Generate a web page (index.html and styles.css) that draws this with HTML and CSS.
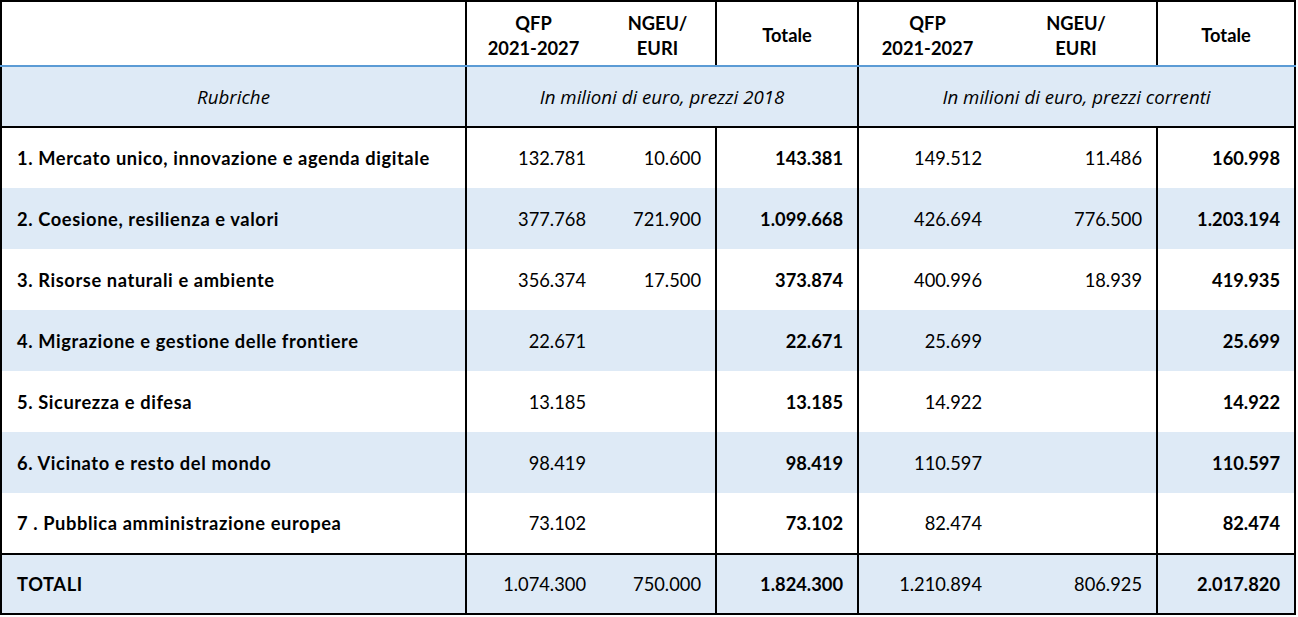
FILE: index.html
```html
<!DOCTYPE html>
<html lang="it">
<head>
<meta charset="utf-8">
<title>Rubriche QFP 2021-2027</title>
<link rel="stylesheet" href="styles.css">
</head>
<body>
<table class="budget">
  <colgroup>
    <col class="c-label">
    <col class="c-qfp">
    <col class="c-ngeu">
    <col class="c-tot">
    <col class="c-qfp2">
    <col class="c-ngeu2">
    <col class="c-tot2">
  </colgroup>
  <thead>
    <tr class="head">
      <th class="blank"></th>
      <th class="h">QFP<br>2021-2027</th>
      <th class="h sep-r">NGEU/<br>EURI</th>
      <th class="h sep-r">Totale</th>
      <th class="h">QFP<br>2021-2027</th>
      <th class="h sep-r">NGEU/<br>EURI</th>
      <th class="h">Totale</th>
    </tr>
    <tr class="sub">
      <th class="sub-label">Rubriche</th>
      <th class="sub-label" colspan="3">In milioni di euro, prezzi 2018</th>
      <th class="sub-label" colspan="3">In milioni di euro, prezzi correnti</th>
    </tr>
  </thead>
  <tbody>
    <tr>
      <td class="name">1. Mercato unico, innovazione e agenda digitale</td>
      <td class="num">132.781</td><td class="num sep-r">10.600</td><td class="num tot sep-r">143.381</td>
      <td class="num">149.512</td><td class="num sep-r">11.486</td><td class="num tot">160.998</td>
    </tr>
    <tr class="band">
      <td class="name">2. Coesione, resilienza e valori</td>
      <td class="num">377.768</td><td class="num sep-r">721.900</td><td class="num tot sep-r">1.099.668</td>
      <td class="num">426.694</td><td class="num sep-r">776.500</td><td class="num tot">1.203.194</td>
    </tr>
    <tr>
      <td class="name">3. Risorse naturali e ambiente</td>
      <td class="num">356.374</td><td class="num sep-r">17.500</td><td class="num tot sep-r">373.874</td>
      <td class="num">400.996</td><td class="num sep-r">18.939</td><td class="num tot">419.935</td>
    </tr>
    <tr class="band">
      <td class="name">4. Migrazione e gestione delle frontiere</td>
      <td class="num">22.671</td><td class="num sep-r"></td><td class="num tot sep-r">22.671</td>
      <td class="num">25.699</td><td class="num sep-r"></td><td class="num tot">25.699</td>
    </tr>
    <tr>
      <td class="name">5. Sicurezza e difesa</td>
      <td class="num">13.185</td><td class="num sep-r"></td><td class="num tot sep-r">13.185</td>
      <td class="num">14.922</td><td class="num sep-r"></td><td class="num tot">14.922</td>
    </tr>
    <tr class="band">
      <td class="name">6. Vicinato e resto del mondo</td>
      <td class="num">98.419</td><td class="num sep-r"></td><td class="num tot sep-r">98.419</td>
      <td class="num">110.597</td><td class="num sep-r"></td><td class="num tot">110.597</td>
    </tr>
    <tr>
      <td class="name">7 . Pubblica amministrazione europea</td>
      <td class="num">73.102</td><td class="num sep-r"></td><td class="num tot sep-r">73.102</td>
      <td class="num">82.474</td><td class="num sep-r"></td><td class="num tot">82.474</td>
    </tr>
  </tbody>
  <tfoot>
    <tr class="band total-row">
      <td class="name">TOTALI</td>
      <td class="num">1.074.300</td><td class="num sep-r">750.000</td><td class="num tot sep-r">1.824.300</td>
      <td class="num">1.210.894</td><td class="num sep-r">806.925</td><td class="num tot">2.017.820</td>
    </tr>
  </tfoot>
</table>
</body>
</html>
```

FILE: styles.css
```css
html, body {
  margin: 0;
  padding: 0;
  background: #ffffff;
}

.budget {
  border-collapse: collapse;
  table-layout: fixed;
  width: 1294px;
  font-family: Lato, "Liberation Sans", sans-serif;
  font-size: 18.3px;
  color: #000;
  border: 2px solid #000;
}

.c-label { width: 465px; }
.c-qfp { width: 134px; }
.c-ngeu { width: 116px; }
.c-tot { width: 142px; }
.c-qfp2 { width: 138px; }
.c-ngeu2 { width: 161px; }
.c-tot2 { width: 138px; }

.budget th,
.budget td {
  padding: 0;
}

.budget th:first-child,
.budget td:first-child {
  border-right: 2px solid #000;
}

.budget td:nth-child(4),
.budget th:nth-child(4) {
  border-right: 2px solid #000;
}

.sep-r {
  border-right: 2px solid #000;
}

.head {
  height: 65px;
}

.head th {
  font-weight: 700;
  text-align: center;
  vertical-align: middle;
  line-height: 25px;
  border-bottom: 2px solid #5b9bd5;
  padding-top: 4px;
}

.sub {
  height: 61px;
  background: #deeaf6;
}

.sub th {
  font-weight: 400;
  font-style: italic;
  font-family: "Open Sans", "DejaVu Sans", sans-serif;
  font-size: 18.7px;
  text-align: center;
  vertical-align: middle;
  border-bottom: 2px solid #000;
  border-right: 2px solid #000;
}

.sub th:last-child {
  border-right: none;
}

.budget tbody tr {
  height: 61px;
}

.total-row {
  height: 60px;
}

.band {
  background: #deeaf6;
}

.name {
  font-weight: 700;
  letter-spacing: 0.6px;
  padding-left: 15px !important;
  text-align: left;
  vertical-align: middle;
}

.num {
  text-align: right;
  padding-right: 14px !important;
  vertical-align: middle;
}

.tot {
  font-weight: 700;
}

.total-row td {
  border-top: 2px solid #000;
}
```
